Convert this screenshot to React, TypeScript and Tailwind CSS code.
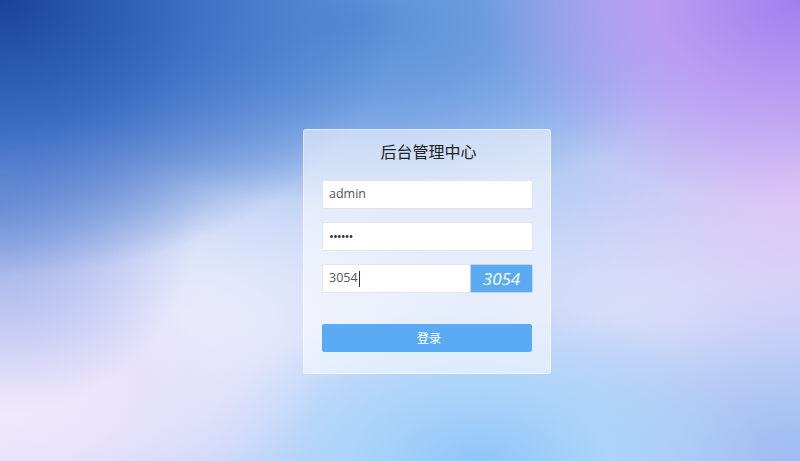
import React from "react";

export default function App() {
  return (
    <div
      className="relative w-full h-[461px] overflow-hidden bg-[#c6d4f6] bg-[radial-gradient(ellipse_50%_60%_at_0%_0%,#18449a_0%,#3a6cc2_45%,transparent_100%),radial-gradient(ellipse_40%_45%_at_100%_0%,#a080ee_0%,#bb9cf2_45%,transparent_100%),radial-gradient(ellipse_30%_40%_at_100%_40%,#e0c8f6_0%,transparent_100%),radial-gradient(ellipse_45%_40%_at_45%_5%,#5a8ed6_0%,#6e9ee0_40%,transparent_100%),radial-gradient(ellipse_25%_45%_at_0%_45%,#94aae6_0%,transparent_100%),radial-gradient(ellipse_40%_40%_at_0%_85%,#f4eafc_0%,#e8e2fb_40%,transparent_100%),radial-gradient(ellipse_35%_35%_at_60%_100%,#90c6f8_0%,#acd4fa_45%,transparent_100%),radial-gradient(ellipse_40%_40%_at_100%_100%,#a0bcf2_0%,transparent_100%),radial-gradient(ellipse_35%_35%_at_25%_70%,#eceefc_0%,transparent_100%),radial-gradient(ellipse_30%_30%_at_85%_70%,#dce0f8_0%,transparent_100%),linear-gradient(180deg,#9cbcf0_0%,#c8d6f6_60%,#c0d0f6_100%)] flex justify-center pt-[129px] pl-[54px]"
      style={{ fontFamily: '"Open Sans", "Noto Sans", "Noto Sans CJK SC", sans-serif' }}
    >
      <div className="w-[248px] h-[245px] rounded-[3px] bg-[rgba(255,255,255,0.55)] border border-[rgba(255,255,255,0.45)] pt-[10px] pl-[18px] pr-[17px] flex flex-col">
        <div
          className="text-center text-[16px] leading-[22px] text-[#222] h-[22px] pl-[2px]"
          style={{ fontFamily: '"Noto Sans CJK SC", sans-serif' }}
        >
          后台管理中心
        </div>
        <div className="mt-[18px] h-[29px] bg-white border border-[#e2e5ea] rounded-[2px] flex items-center pl-[6px] text-[12.5px] text-[#555]">
          admin
        </div>
        <div className="mt-[13px] h-[29px] bg-white border border-[#e2e5ea] rounded-[2px] flex items-center pl-[6px] text-[13px] text-[#333] tracking-[-1px]">
          ••••••
        </div>
        <div className="mt-[13px] h-[29px] flex">
          <div className="flex-1 bg-white border border-[#e2e5ea] border-r-0 rounded-l-[2px] flex items-center pl-[6px] text-[12.5px] text-[#555]">
            3054<span className="inline-block w-px h-[16px] bg-[#333] ml-[1px]"></span>
          </div>
          <div className="w-[63px] bg-[#5aabf2] border border-[#bcd8f4] rounded-r-[2px] flex items-center justify-center text-white text-[17px] italic">
            3054
          </div>
        </div>
        <div
          className="mt-[31px] h-[28px] w-[210px] bg-[#5aabf3] rounded-[2px] flex items-center justify-center text-white text-[12px] pl-[4px]"
          style={{ fontFamily: '"Noto Sans CJK SC", sans-serif' }}
        >
          登录
        </div>
      </div>
    </div>
  );
}
